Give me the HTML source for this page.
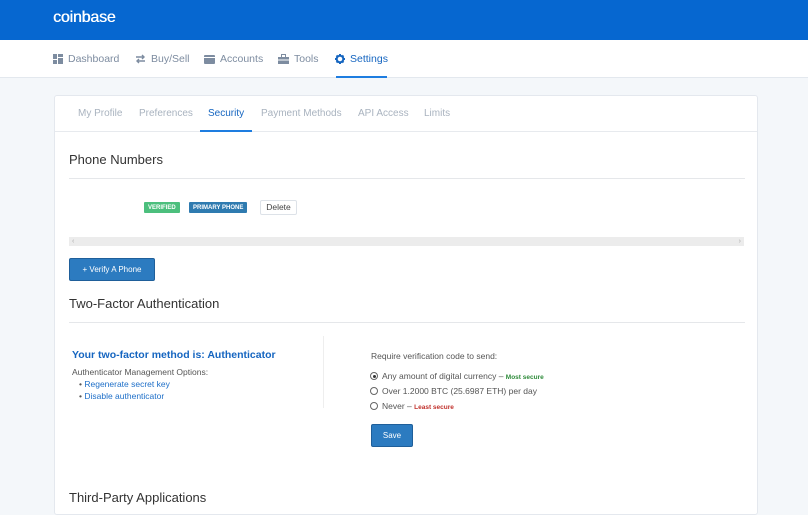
<!DOCTYPE html>
<html><head><meta charset="utf-8"><style>
*{box-sizing:border-box;margin:0;padding:0}
body{width:808px;height:504px;overflow:hidden;background:#f4f7fa;font-family:"Liberation Sans",sans-serif;position:relative}
.hdr{position:absolute;left:0;top:0;width:808px;height:40px;background:#0667d0}
.logo{position:absolute;left:53px;top:9px;color:#fff;font-size:16px;font-weight:normal;letter-spacing:-0.2px;text-shadow:0.4px 0 0 #fff}
.nav{position:absolute;left:0;top:40px;width:808px;height:38px;background:#fff;border-bottom:1px solid #e3e8ee}
.ni{position:absolute;top:13px;font-size:10.5px;color:#7d8ca0;display:flex;align-items:center;gap:5px}
.ni.act{color:#1565c0}
.nu{position:absolute;left:336px;top:76px;width:51px;height:2px;background:#1e7de0}
.card{position:absolute;left:54px;top:95px;width:704px;height:420px;background:#fff;border:1px solid #e4e8ee;border-radius:3px}
.tabs{position:absolute;left:0;top:0;width:702px;height:36px;border-bottom:1px solid #e7eaee}
.tab{position:absolute;top:12px;font-size:10px;color:#a9b3bf}
.tab.act{color:#1565c0}
.tu{position:absolute;left:145px;top:34px;width:52px;height:2px;background:#1e7de0}
h2{position:absolute;font-weight:normal;font-size:13px;color:#333;line-height:15px}
.hr{position:absolute;left:14px;width:676px;height:1px;background:#e5e7ea}
.b{position:absolute;font-size:6px;font-weight:bold;color:#fff;height:11px;padding:0 4px;border-radius:1px;display:flex;align-items:center}
.btn{position:absolute;background:#2c7bc0;border:1px solid #1f5f9a;color:#fff;font-size:8px;border-radius:2px;text-align:center}
.t{position:absolute;font-size:8.5px;color:#555;white-space:nowrap}
.r{display:inline-block;width:8px;height:8px;border:1px solid #666;border-radius:50%;vertical-align:-1px;margin-right:4px;position:relative}
</style></head><body>
<div class="hdr"><div class="logo">coinbase</div></div>
<div class="nav">
 <div class="ni" style="left:53px"><svg width="10" height="10"><rect x="0" y="0" width="4" height="5" fill="#7d8ca0"/><rect x="5" y="0" width="5" height="3" fill="#7d8ca0"/><rect x="0" y="6" width="4" height="4" fill="#7d8ca0"/><rect x="5" y="4" width="5" height="6" fill="#7d8ca0"/></svg>Dashboard</div>
 <div class="ni" style="left:135px"><svg width="11" height="10"><path d="M1 3h8M7 1l2 2-2 2M10 7H2M4 5L2 7l2 2" stroke="#7d8ca0" stroke-width="1.4" fill="none"/></svg>Buy/Sell</div>
 <div class="ni" style="left:204px"><svg width="11" height="10"><rect x="0" y="1" width="11" height="9" rx="1" fill="#7d8ca0"/><rect x="0" y="3" width="11" height="1" fill="#fff"/></svg>Accounts</div>
 <div class="ni" style="left:278px"><svg width="11" height="10"><rect x="0" y="3" width="11" height="7" fill="#7d8ca0"/><rect x="3.5" y="0.5" width="4" height="3" fill="none" stroke="#7d8ca0"/><rect x="0" y="5.5" width="11" height="1" fill="#fff"/></svg>Tools</div>
 <div class="ni act" style="left:335px"><svg width="10" height="10" viewBox="0 0 10 10"><circle cx="5" cy="5" r="3.3" fill="none" stroke="#1565c0" stroke-width="2"/><g stroke="#1565c0" stroke-width="2"><path d="M5 0v2M5 8v2M0 5h2M8 5h2M1.5 1.5l1.4 1.4M7.1 7.1l1.4 1.4M1.5 8.5l1.4-1.4M7.1 2.9l1.4-1.4"/></g></svg><b style="font-weight:normal">Settings</b></div>
</div>
<div class="nu"></div>
<div class="card">
 <div class="tabs">
  <div class="tab" style="left:23px">My Profile</div>
  <div class="tab" style="left:84px">Preferences</div>
  <div class="tab act" style="left:153px">Security</div>
  <div class="tab" style="left:206px">Payment Methods</div>
  <div class="tab" style="left:303px">API Access</div>
  <div class="tab" style="left:369px">Limits</div>
  <div class="tu"></div>
 </div>
 <h2 style="left:14px;top:56px">Phone Numbers</h2>
 <div class="hr" style="top:82px"></div>
 <div class="b" style="left:89px;top:106px;background:#4cbf7d">VERIFIED</div>
 <div class="b" style="left:134px;top:106px;background:#2f7bb0">PRIMARY PHONE</div>
 <div style="position:absolute;left:205px;top:104px;width:37px;height:15px;border:1px solid #dde2e8;border-radius:2px;font-size:8.5px;color:#444;text-align:center;line-height:13px">Delete</div>
 <div style="position:absolute;left:14px;top:141px;width:675px;height:9px;background:#ececec;font-size:7px;color:#aaa;line-height:9px;padding:0 3px">‹<span style="float:right">›</span></div>
 <div class="btn" style="left:14px;top:162px;width:86px;height:23px;line-height:21px">+ Verify A Phone</div>
 <h2 style="left:14px;top:200px">Two-Factor Authentication</h2>
 <div class="hr" style="top:226px"></div>
 <div style="position:absolute;left:268px;top:240px;width:1px;height:72px;background:#eee"></div>
 <div class="t" style="left:17px;top:253px;font-size:10.5px;font-weight:bold;color:#1565c0">Your two-factor method is: Authenticator</div>
 <div class="t" style="left:17px;top:271px">Authenticator Management Options:</div>
 <div class="t" style="left:24px;top:283px;color:#1e6fc8"><span style="color:#555">•</span> Regenerate secret key</div>
 <div class="t" style="left:24px;top:295px;color:#1e6fc8"><span style="color:#555">•</span> Disable authenticator</div>
 <div class="t" style="left:316px;top:255px">Require verification code to send:</div>
 <div class="t" style="left:315px;top:275px"><span class="r"><span style="position:absolute;left:1.5px;top:1.5px;width:3px;height:3px;border-radius:50%;background:#333"></span></span>Any amount of digital currency – <b style="font-size:6.5px;color:#2e8b3a">Most secure</b></div>
 <div class="t" style="left:315px;top:290px"><span class="r"></span>Over 1.2000 BTC (25.6987 ETH) per day</div>
 <div class="t" style="left:315px;top:305px"><span class="r"></span>Never – <b style="font-size:6.5px;color:#c0302b">Least secure</b></div>
 <div class="btn" style="left:316px;top:328px;width:42px;height:23px;line-height:21px">Save</div>
 <h2 style="left:14px;top:394px">Third-Party Applications</h2>
</div>
</body></html>
